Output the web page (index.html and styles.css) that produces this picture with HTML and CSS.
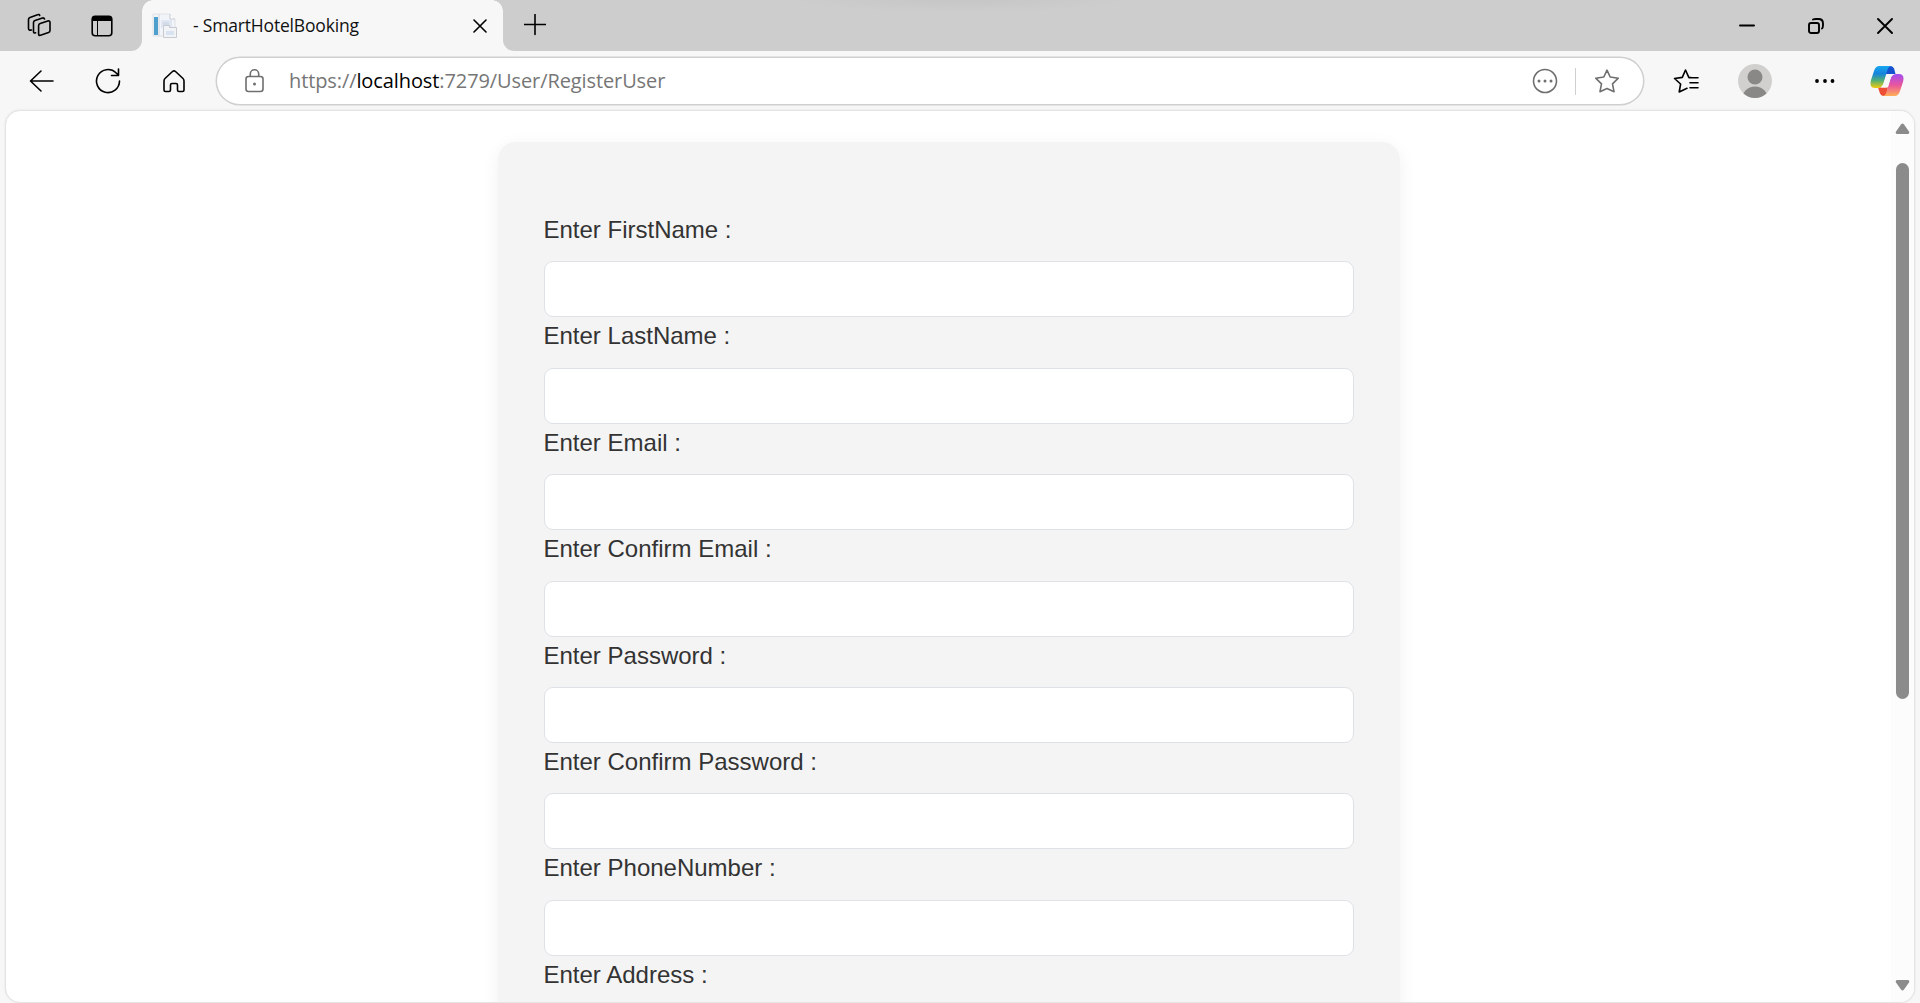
FILE: index.html
```html
<!DOCTYPE html>
<html lang="en">
<head>
<meta charset="utf-8">
<title>- SmartHotelBooking</title>
<link rel="stylesheet" href="styles.css">
</head>
<body>
<div class="browser">
  <header class="tabstrip">
    <div class="tab-tools">
      <svg class="ico workspaces" width="28" height="28" viewBox="0 0 28 28"><path d="M14.200 11.500 L21.800 9Q24 8.500 24 10.500V18.500Q24 20 22.500 20.600L14.500 23.300Q12.600 23.800 12.600 22V13.800Q12.600 12 14.200 11.500Z"/><path d="M9.600 20.800Q7.500 21.500 7.500 19.500V10.500Q7.500 9 9 8.500L16.500 6Q18 5.600 18.500 7"/><path d="M5.500 18Q2.500 18.600 2.500 16.500V7.500Q2.500 6 4 5.400L11.500 2.700Q13.300 2 13.700 3.500"/></svg>
      <svg class="ico tabmenu" width="24" height="24" viewBox="0 0 24 24"><rect x="2.200" y="2.200" width="19.600" height="19.600" rx="3"/><path class="solid" d="M2 7V5a3 3 0 0 1 3-3h14a3 3 0 0 1 3 3v2zM7 7h1v15H7z"/></svg>
    </div>
    <div class="tab">
      <svg class="favicon" width="26" height="26" viewBox="0 0 26 26"><path d="M1 1h17l5 5v17H1z" fill="#f1f4f8" stroke="#dde1e6"/><path d="M18 1v5h5" fill="#fff" stroke="#c5cad2"/><path d="M2 4h4v18H2z" fill="#4f9fcd"/><path d="M7 1v22" stroke="#d5dae1"/><path d="M9 7h11v8H9z" fill="#e0e7f2"/><path d="M11 10h6M11 12h6" stroke="#c5cfdf"/><path d="M11.500 14.500V12.500h6v2h7v10h-13z" fill="#f1f3f7" stroke="#c7cbd1"/><path d="M14 18h8v4h-8z" fill="#d8e2f0"/></svg>
      <span class="tab-title">- SmartHotelBooking</span>
      <svg class="ico tab-close" width="14" height="14" viewBox="0 0 14 14"><path d="M1 1l12 12M13 1L1 13"/></svg>
    </div>
    <div class="strip-rest">
      <svg class="ico plus" width="22" height="22" viewBox="0 0 22 22"><path d="M11 .5v20M.5 10.500h21"/></svg>
      <div class="window-controls">
        <svg class="ico" width="16" height="16" viewBox="0 0 16 16"><path d="M1 7.500h14"/></svg>
        <svg class="ico" width="16" height="16" viewBox="0 0 16 16"><rect x="1" y="5" width="10" height="10" rx="2"/><path d="M5 1.500Q6 1 8 1h2.500Q15 1 15 5.500V7q0 3-1 3.500"/></svg>
        <svg class="ico" width="16" height="16" viewBox="0 0 16 16"><path d="M1 1l14 14M15 1L1 15"/></svg>
      </div>
    </div>
  </header>
  <nav class="toolbar">
    <svg class="ico back" width="26" height="24" viewBox="0 0 26 24"><path d="M13 2L2.500 12 13 22M2.500 12H25"/></svg>
    <svg class="ico reload" width="26" height="26" viewBox="0 0 26 26"><path d="M24.500 13A11.500 11.500 0 1 1 21 4.800L23.500 7M23.500 1v6.500h-7"/></svg>
    <svg class="ico home" width="24" height="24" viewBox="0 0 24 24"><path d="M3 9.500L10.500 2.500Q12 1.200 13.500 2.500L21 9.500Q22 10.500 22 12V21Q22 22.500 20.500 22.500H17Q15.500 22.500 15.500 21V16Q15.500 14.500 14 14.500H10Q8.500 14.500 8.500 16V21Q8.500 22.500 7 22.500H3.500Q2 22.500 2 21V12Q2 10.500 3 9.500Z"/></svg>
    <div class="address">
      <svg class="ico lock" width="20" height="24" viewBox="0 0 20 24"><rect x="1" y="7.500" width="17" height="15" rx="2.500"/><path d="M5.300 7V5a4.200 4.200 0 0 1 8.400 0v2"/><circle class="dot" cx="9.500" cy="15" r="1.500"/></svg>
      <span class="url">https://<b>localhost</b>:7279/User/RegisterUser</span>
      <svg class="ico more-circle" width="26" height="26" viewBox="0 0 26 26"><circle cx="13" cy="13" r="11.500"/><circle class="dot" cx="7" cy="13" r="1.500"/><circle class="dot" cx="13" cy="13" r="1.500"/><circle class="dot" cx="19" cy="13" r="1.500"/></svg>
      <span class="divider"></span>
      <svg class="ico star" width="26" height="26" viewBox="0 0 26 26"><path d="M13 2.200L16.200 9 24.300 10.200 18.500 15.800 20 23.700 13 20.500 6 23.700 7.500 15.800 1.700 10.200 9.800 9Z"/></svg>
    </div>
    <svg class="ico favorites" width="26" height="26" viewBox="0 0 26 26"><path d="M14 20.300L6.200 24 7.600 16 1.500 10.500 9.300 9.400 12.500 2 15.800 9.300 18 9.600M16 9.700h9M17 14.700h8M17 19.700h8"/></svg>
    <svg class="avatar" width="34" height="34" viewBox="0 0 34 34"><clipPath id="avatar-clip"><circle cx="17" cy="17" r="17"/></clipPath><g clip-path="url(#avatar-clip)"><path fill="#d2d0ce" d="M0 0h34v34H0z"/><circle cx="17" cy="13" r="7.500" fill="#8a8886"/><circle cx="17" cy="36" r="13.500" fill="#8a8886"/></g></svg>
    <svg class="menu" width="20" height="6" viewBox="0 0 20 6"><circle cx="2" cy="3" r="1.900"/><circle cx="10" cy="3" r="1.900"/><circle cx="17.500" cy="3" r="1.900"/></svg>
    <svg class="copilot" width="34" height="32" viewBox="0 0 34 32">
      <defs>
        <linearGradient id="cool" x1="0" y1="0" x2="0" y2="1"><stop offset="0" stop-color="#18a8f0"/><stop offset=".35" stop-color="#1483dc"/><stop offset=".65" stop-color="#4fae78"/><stop offset="1" stop-color="#f4cb0c"/></linearGradient>
        <linearGradient id="warm" x1="0" y1="0" x2="0" y2="1"><stop offset="0" stop-color="#a34df2"/><stop offset=".5" stop-color="#e9559d"/><stop offset="1" stop-color="#ffae55"/></linearGradient>
      </defs>
      <path fill="#1652d0" d="M10 1H20Q23.500 1 24.500 5L25.500 9H16z"/>
      <path fill="#ee4e36" d="M8 22.500H18L16 31H14Q10.500 31 9.500 27z"/>
      <path fill="url(#cool)" d="M9.500 1H21Q18.500 1.500 17.500 5L13.500 18Q12 23 7.500 23H5Q-1 23 1 15L4 6Q5.500 1 9.500 1Z"/>
      <path fill="url(#warm)" d="M24.500 31H13Q15.500 30.500 16.500 27L20.500 14Q22 9 26.500 9H29Q35 9 33 17L30 26Q28.500 31 24.500 31Z"/>
      <path fill="#f7f7f7" d="M19 9H24Q21.500 10 20.500 13L18.500 20Q17.700 22.500 15.500 22.500H11Q13.200 21 14 18L16 11.500Q16.800 9 19 9Z"/>
    </svg>
  </nav>
  <main class="viewport">
    <div class="page">
      <form class="card">
        <div class="field"><label for="first">Enter FirstName :</label><input id="first" type="text"></div>
        <div class="field"><label for="last">Enter LastName :</label><input id="last" type="text"></div>
        <div class="field"><label for="email">Enter Email :</label><input id="email" type="text"></div>
        <div class="field"><label for="email2">Enter Confirm Email :</label><input id="email2" type="text"></div>
        <div class="field"><label for="pass">Enter Password :</label><input id="pass" type="password"></div>
        <div class="field"><label for="pass2">Enter Confirm Password :</label><input id="pass2" type="password"></div>
        <div class="field"><label for="phone">Enter PhoneNumber :</label><input id="phone" type="text"></div>
        <div class="field"><label for="address">Enter Address :</label><input id="address" type="text"></div>
      </form>
    </div>
    <div class="scrollbar">
      <svg width="15" height="12" viewBox="0 0 15 12"><path d="M6 1.500Q7.500-.5 9 1.500L14 8.500Q15 11 12.500 11H2.500Q0 11 1 8.500Z"/></svg>
      <div class="thumb"></div>
      <svg class="down" width="15" height="12" viewBox="0 0 15 12"><path d="M6 10.500Q7.500 12.500 9 10.500L14 3.500Q15 1 12.500 1H2.500Q0 1 1 3.500Z"/></svg>
    </div>
  </main>
</div>
</body>
</html>
```
FILE: styles.css
```css
* { box-sizing: border-box; }
body { margin: 0; background: #f7f7f7; overflow: hidden; }
svg { display: block; flex: none; }
.browser { display: flex; flex-direction: column; width: 100%; height: 1003px; }

.ico { fill: none; stroke: #000; stroke-width: 1.6; stroke-linecap: round; stroke-linejoin: round; }
.ico .solid { fill: #000; stroke: none; }
.ico .dot { fill: #6f6f6f; stroke: none; }

.tabstrip { display: flex; height: 51px; flex: none; }
.tab-tools { display: flex; align-items: center; width: 142px; padding-left: 26px; background: #cdcdcd; border-bottom-right-radius: 11px; }
.tabmenu { margin-left: 36px; }
.tab { position: relative; display: flex; align-items: center; width: 361px; padding-left: 10px; }
.tab::before, .tab::after { content: ""; position: absolute; top: 0; width: 11px; height: 11px; }
.tab::before { left: 0; background: radial-gradient(circle at 100% 100%, transparent 10.500px, #cdcdcd 11px); }
.tab::after { right: 0; background: radial-gradient(circle at 0 100%, transparent 10.500px, #cdcdcd 11px); }
.tab-title { width: 279px; margin: 0 0 1px 15px; font: 17.500px/24px "Open Sans", sans-serif; letter-spacing: -0.18px; color: #111; white-space: pre; }
.tab-close { margin-left: 1px; }
.strip-rest { display: flex; flex: 1; padding: 0 27px 0 21px; border-bottom-left-radius: 11px; background: radial-gradient(ellipse 170px 12px at 457px 0, #c6c6c6, #cdcdcd); }
.plus { margin-top: 14px; }
.window-controls { display: flex; gap: 53px; align-items: center; margin-left: auto; }
.window-controls .ico { stroke-width: 1.900; }

.toolbar { display: flex; align-items: center; height: 60px; flex: none; padding-left: 28px; }
.reload { margin-left: 41px; }
.home { margin-left: 41px; }
.address { display: flex; align-items: center; width: 1428px; height: 48px; margin-left: 30px; padding-left: 28px; border: 1px solid #cfcfcf; border-radius: 24px; background: #fff; box-shadow: 0 0 0 .5px #cfcfcf; }
.address .ico { stroke: #6f6f6f; }
.url { width: 1243px; margin-left: 24px; font: 20px/28px "Open Sans", sans-serif; letter-spacing: -0.1px; color: #767676; }
.url b { font-weight: 400; color: #000; }
.divider { width: 1px; height: 27px; margin: 0 18px 0 17px; background: #d0d0d0; }
.favorites { margin-left: 29px; }
.avatar { margin-left: 39px; }
.menu { margin-left: 43px; }
.copilot { margin-left: 35px; }

.viewport { display: flex; height: 893px; margin: -1px 5px 0; border: 1px solid #e4e4e4; border-radius: 15px; background: #fff; overflow: hidden; box-shadow: 0 0 2px #ddd; }
.page { flex: 1; padding: 31px 0 0 492px; overflow: hidden; }
.card { width: 902px; height: 1100px; padding: 70px 46px; border-radius: 18px; background: #f4f4f4; box-shadow: 0 4px 18px rgba(0,0,0,.06); }
.field { display: flex; flex-direction: column; justify-content: space-between; height: 106.400px; padding-bottom: 1px; }
.field label { margin-left: -0.5px; font: 24px/36px "Liberation Sans", Arial, sans-serif; color: #333; }
.field input { width: 100%; height: 56px; border: 1px solid #dee2e6; border-radius: 9px; background: #fff; }
.scrollbar { display: flex; flex-direction: column; align-items: center; width: 23px; padding: 12px 0 11px; background: #fcfcfc; fill: #8b8b8b; }
.thumb { width: 13px; height: 536px; margin-top: 28px; border-radius: 7px; background: #8b8b8b; }
.down { margin-top: auto; }
```
